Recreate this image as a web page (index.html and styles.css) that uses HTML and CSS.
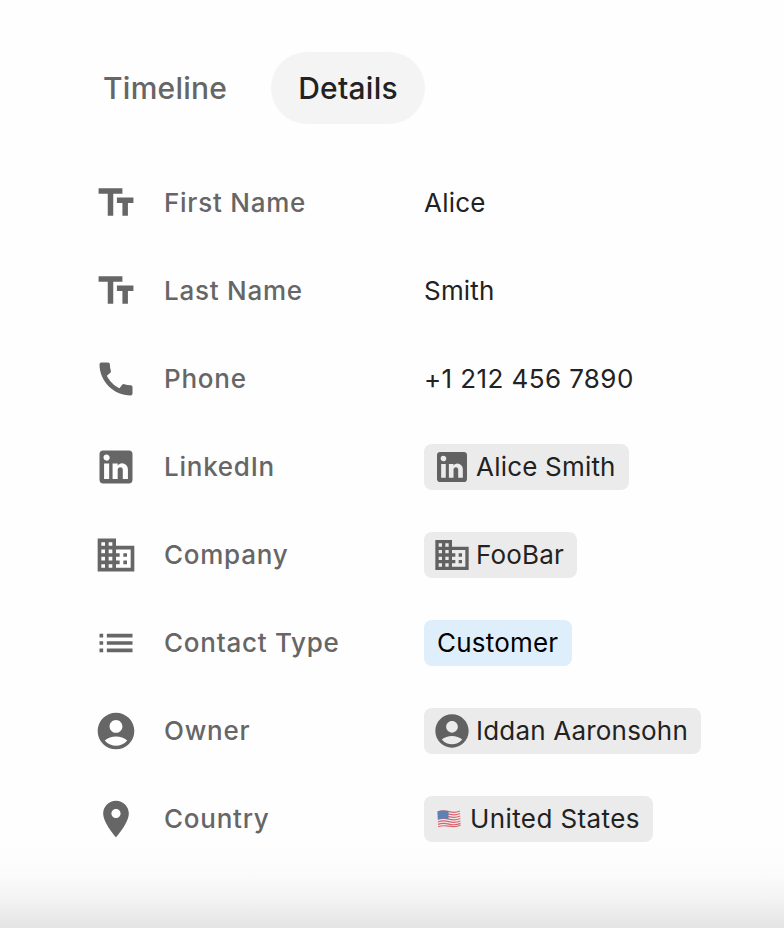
FILE: index.html
```
<!DOCTYPE html>
<html lang="en">
<head>
  <meta charset="UTF-8">
  <meta name="viewport" content="width=device-width, initial-scale=1.0">
  <title>Contact Details</title>
  <link rel="stylesheet" href="styles.css">
</head>
<body>
  <!-- Icon definitions -->
  <svg class="sprite" aria-hidden="true">
    <symbol id="icon-text" viewBox="0 0 24 24"><path d="M2.5 4v3h5v12h3V7h5V4h-13zm19 5h-9v3h3v7h3v-7h3V9z"/></symbol>
    <symbol id="icon-phone" viewBox="0 0 24 24"><path d="M20.010 15.380c-1.230 0-2.420-.2-3.530-.56-.35-.12-.74-.03-1.010.24l-1.570 1.970c-2.830-1.350-5.480-3.900-6.890-6.830l1.950-1.660c.27-.28.35-.67.24-1.020-.37-1.110-.56-2.300-.56-3.530 0-.54-.45-.99-.99-.99H4.190C3.650 3 3 3.240 3 3.990 3 13.280 10.730 21 20.010 21c.71 0 .99-.63.99-1.180v-3.450c0-.54-.45-.99-.99-.99z"/></symbol>
    <symbol id="icon-linkedin" viewBox="0 0 24 24"><path d="M19 3a2 2 0 0 1 2 2v14a2 2 0 0 1-2 2H5a2 2 0 0 1-2-2V5a2 2 0 0 1 2-2h14m-.5 15.500v-5.300a3.260 3.260 0 0 0-3.260-3.260c-.85 0-1.840.520-2.320 1.300v-1.110h-2.790v8.370h2.790v-4.930c0-.77.62-1.400 1.390-1.400a1.400 1.400 0 0 1 1.400 1.400v4.930h2.790M6.880 8.560a1.680 1.680 0 0 0 1.680-1.680c0-.93-.75-1.690-1.680-1.690a1.690 1.690 0 0 0-1.690 1.690c0 .93.76 1.680 1.690 1.680m1.390 9.940v-8.370H5.500v8.370h2.770z"/></symbol>
    <symbol id="icon-company" viewBox="0 0 24 24"><path d="M12 7V3H2v18h20V7H12zM6 19H4v-2h2v2zm0-4H4v-2h2v2zm0-4H4V9h2v2zm0-4H4V5h2v2zm4 12H8v-2h2v2zm0-4H8v-2h2v2zm0-4H8V9h2v2zm0-4H8V5h2v2zm10 12h-8v-2h2v-2h-2v-2h2v-2h-2V9h8v10zm-2-8h-2v2h2v-2zm0 4h-2v2h2v-2z"/></symbol>
    <symbol id="icon-list" viewBox="0 0 24 24"><path d="M3 13h2v-2H3v2zm0 4h2v-2H3v2zm0-8h2V7H3v2zm4 4h14v-2H7v2zm0 4h14v-2H7v2zM7 7v2h14V7H7z"/></symbol>
    <symbol id="icon-person" viewBox="0 0 24 24"><path d="M12 2C6.480 2 2 6.480 2 12s4.480 10 10 10 10-4.480 10-10S17.520 2 12 2zm0 4c1.930 0 3.500 1.570 3.500 3.500S13.930 13 12 13s-3.500-1.570-3.500-3.500S10.070 6 12 6zm0 14c-2.030 0-4.430-.82-6.140-2.880C7.550 15.800 9.680 15 12 15s4.450.8 6.140 2.120C16.430 19.180 14.030 20 12 20z"/></symbol>
    <symbol id="icon-place" viewBox="0 0 24 24"><path d="M12 2C8.130 2 5 5.130 5 9c0 5.250 7 13 7 13s7-7.750 7-13c0-3.870-3.130-7-7-7zm0 9.500c-1.380 0-2.500-1.120-2.500-2.500s1.120-2.500 2.500-2.500 2.500 1.120 2.500 2.500-1.120 2.500-2.500 2.500z"/></symbol>
  </svg>

  <main class="panel">
    <nav class="tabs">
      <button class="tab">Timeline</button>
      <button class="tab active">Details</button>
    </nav>

    <ul class="fields">
      <li class="field">
        <svg class="icon"><use href="#icon-text"/></svg>
        <span class="label">First Name</span>
        <span class="value">Alice</span>
      </li>
      <li class="field">
        <svg class="icon"><use href="#icon-text"/></svg>
        <span class="label">Last Name</span>
        <span class="value">Smith</span>
      </li>
      <li class="field">
        <svg class="icon"><use href="#icon-phone"/></svg>
        <span class="label">Phone</span>
        <span class="value wide">+1 212 456 7890</span>
      </li>
      <li class="field">
        <svg class="icon"><use href="#icon-linkedin"/></svg>
        <span class="label">LinkedIn</span>
        <span class="chip with-icon"><svg class="chip-icon"><use href="#icon-linkedin"/></svg><span class="value">Alice Smith</span></span>
      </li>
      <li class="field">
        <svg class="icon"><use href="#icon-company"/></svg>
        <span class="label">Company</span>
        <span class="chip with-icon"><svg class="chip-icon"><use href="#icon-company"/></svg><span class="value">FooBar</span></span>
      </li>
      <li class="field">
        <svg class="icon"><use href="#icon-list"/></svg>
        <span class="label">Contact Type</span>
        <span class="chip blue"><span class="value">Customer</span></span>
      </li>
      <li class="field">
        <svg class="icon"><use href="#icon-person"/></svg>
        <span class="label">Owner</span>
        <span class="chip with-icon"><svg class="chip-icon"><use href="#icon-person"/></svg><span class="value">Iddan Aaronsohn</span></span>
      </li>
      <li class="field">
        <svg class="icon"><use href="#icon-place"/></svg>
        <span class="label">Country</span>
        <span class="chip">
          <svg class="flag" viewBox="0 0 24 18">
            <path fill="#f3e9ea" d="M.5 1.500C5-.2 8 .2 12 1.200s7.500 1 11-.7l.6 14.500c-4 2-7.500 1.600-11.500.8S5 15.300 1.200 17.300z"/>
            <g fill="none" stroke="#d5666f" stroke-width="1.200">
              <path d="M.5 2C5 .3 8 .7 12 1.700s7.500 1 11-.7"/>
              <path d="M.6 4.500C5 2.800 8 3.200 12 4.200s7.500 1 11-.7"/>
              <path d="M.7 7C5 5.300 8 5.700 12 6.700s7.500 1 11.200-.7"/>
              <path d="M.8 9.500C5 7.800 8 8.200 12 9.200s7.500 1 11.300-.7"/>
              <path d="M.9 12C5 10.300 8 10.700 12 11.700s7.500 1 11.400-.7"/>
              <path d="M1 14.400c4-1.700 7-1.300 11-.3s7.500 1 11.500-.7"/>
              <path d="M1.100 16.800c4-1.700 7-1.300 11-.6s7.500 1 11.500-1.200"/>
            </g>
            <path fill="#5b82b4" d="M.5 1.500C4.500 0 8 .2 11.500 1.100v8C8 8.200 5 8 .9 9.500z"/>
          </svg>
          <span class="value wide">United States</span>
        </span>
      </li>
    </ul>
  </main>
</body>
</html>
```

FILE: styles.css
```
:root {
  --text: #222;
  --text-muted: #666;
  --chip-bg: #ebebeb;
  --chip-blue: #deeefb;
}

* {
  box-sizing: border-box;
}

body {
  margin: 0;
  height: 928px;
  overflow: hidden;
  font-family: 'Inter', sans-serif;
  font-size: 26px;
  color: var(--text);
  background: linear-gradient(to bottom, #fefefe 0, #fefefe 845px, #fbfbfb 875px, #f5f5f5 895px, #e4e4e4 928px);
}

.sprite {
  display: none;
}

.panel {
  padding: 52px 76px 0;
}

.tabs {
  display: flex;
  gap: 17px;
}

.tab {
  height: 72px;
  padding: 0 27px;
  border: 0;
  border-radius: 36px;
  background: none;
  font: 500 30px 'Inter', sans-serif;
  letter-spacing: 0.25px;
  color: var(--text-muted);
}

.tab.active {
  background: #f4f4f4;
  color: var(--text);
}

.fields {
  margin: 35px 0 0;
  padding: 0 0 0 18px;
  list-style: none;
}

.field {
  display: grid;
  grid-template-columns: 70px 260px 1fr;
  align-items: center;
  justify-items: start;
  height: 88px;
}

.icon {
  width: 44px;
  height: 44px;
  fill: var(--text-muted);
}

.label {
  padding-bottom: 2px;
  font-weight: 500;
  letter-spacing: 0.75px;
  color: var(--text-muted);
}

.value {
  padding-bottom: 2px;
  letter-spacing: 0.2px;
}

.value.wide {
  letter-spacing: 0.4px;
}

.chip {
  display: flex;
  align-items: center;
  height: 46px;
  padding: 0 13px;
  border-radius: 8px;
  background: var(--chip-bg);
  white-space: nowrap;
}

.chip.with-icon {
  padding-left: 8px;
}

.chip.blue {
  padding-right: 14px;
  background: var(--chip-blue);
  color: #000;
}

.chip-icon {
  width: 40px;
  height: 40px;
  margin-right: 4px;
  fill: #616161;
}

.flag {
  width: 24px;
  height: 18px;
  margin-right: 9px;
}
```
